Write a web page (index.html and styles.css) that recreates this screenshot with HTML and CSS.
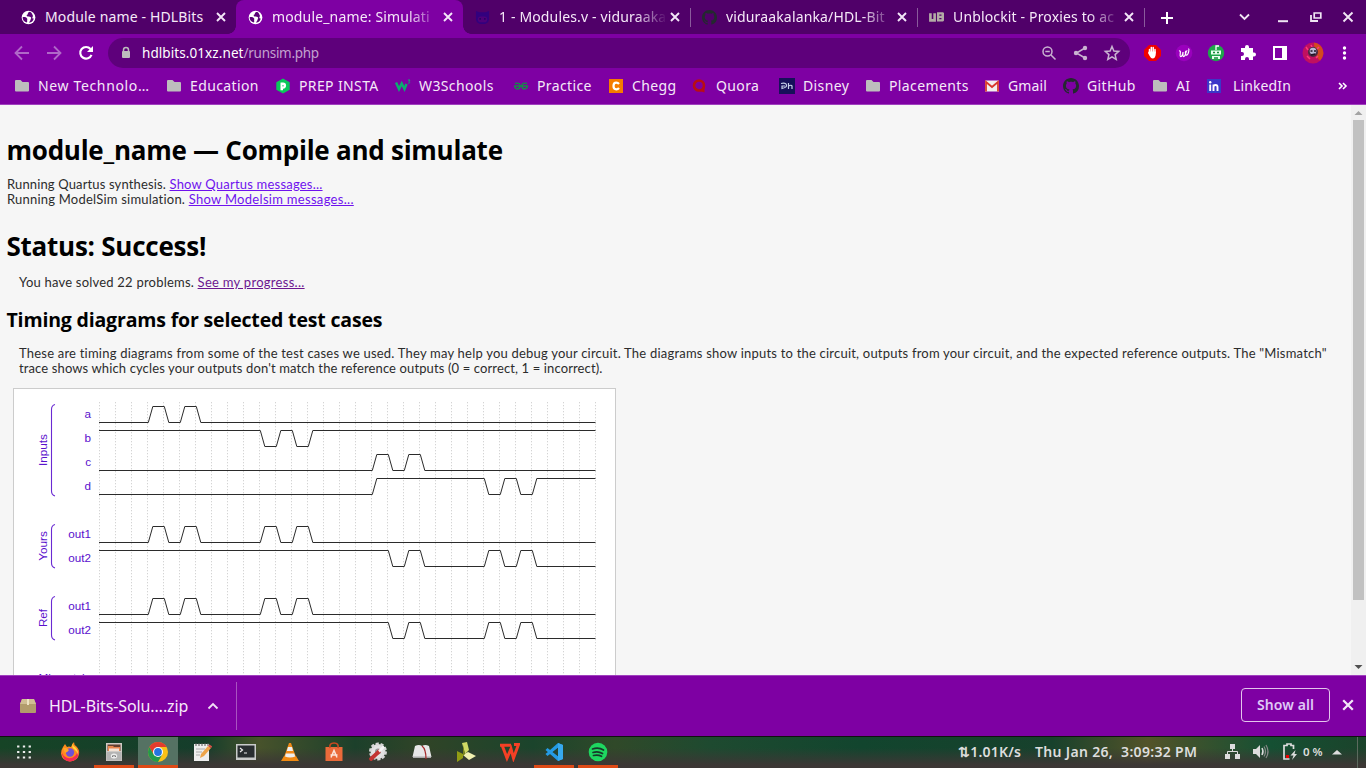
FILE: index.html
```html
<!DOCTYPE html>
<html lang="en">
<head>
<meta charset="utf-8">
<title>module_name: Simulation</title>
<link rel="stylesheet" href="styles.css">
</head>
<body>
<svg class="defs" aria-hidden="true">
  <symbol id="x" viewBox="0 0 10 10"><path d="M1 1l8 8M9 1l-8 8" fill="none" stroke="#f3e6f8" stroke-width="1.9"/></symbol>
  <symbol id="globe" viewBox="0 0 16 16"><circle cx="8" cy="8" r="7.3" fill="#fff"/><path d="M9.3 1.8C7.4 2.6 7 3.5 7.4 4.6c-2 .2-1.5 2-.4 2.4 1.6.5 3.3-.2 3.8 1.2.2 1-.6 1.3-.6 2.1 0 .9-1.1 1.4-1.6 3.2 2.700-.2 4.600-2 5-4.500-1.100.6-1.700-.3-1.400-1.200.3-1 .9-1.300.2-2.600-.7-1.600-1.200-2.700-3.100-3.400zM1.700 7.700c1.800-.4 3.800-.1 4.800 1.300.7 1-.3 1.500.1 2.400.2.7 0 1.300-.6 2C3.600 12.600 1.700 10.600 1.700 7.700z" fill="#5a0076"/></symbol>
  <symbol id="folder" viewBox="0 0 16 16"><path d="M2 2h4.500l2 2H14q1 0 1 1v7.500q0 1-1 1H2q-1 0-1-1V3q0-1 1-1z" fill="#bdbdbd"/></symbol>
  <symbol id="github" viewBox="0 0 16 16"><path fill="#24292f" d="M8 0C3.580 0 0 3.580 0 8c0 3.540 2.290 6.530 5.470 7.590.4.070.55-.17.55-.38 0-.19-.01-.82-.01-1.490-2.010.37-2.530-.49-2.690-.94-.09-.23-.48-.94-.82-1.130-.28-.15-.68-.52-.01-.53.63-.01 1.080.58 1.230.82.72 1.210 1.870.87 2.330.66.070-.52.28-.87.51-1.070-1.780-.2-3.640-.89-3.640-3.950 0-.87.31-1.590.82-2.150-.08-.2-.36-1.020.08-2.120 0 0 .67-.21 2.200.82.640-.18 1.320-.27 2-.27s1.360.09 2 .27c1.530-1.040 2.200-.82 2.200-.82.44 1.100.16 1.920.08 2.120.51.56.82 1.270.82 2.150 0 3.070-1.870 3.750-3.650 3.950.29.25.54.73.54 1.480 0 1.070-.01 1.930-.01 2.200 0 .21.15.46.55.38A8.010 8.010 0 0 0 16 8c0-4.420-3.580-8-8-8z"/></symbol>
</svg>

<header class="browser">
  <div class="tabs">
    <div class="tab"><svg class="fav"><use href="#globe"/></svg><span class="title">Module name - HDLBits</span><svg class="close"><use href="#x"/></svg></div>
    <div class="tab active"><svg class="fav"><use href="#globe"/></svg><span class="title fade">module_name: Simulati</span><svg class="close"><use href="#x"/></svg></div>
    <div class="tab"><svg class="fav" viewBox="0 0 16 16"><path d="M1 1l4 1.500h6L15 1v9q-1 5-7 5t-7-5z" fill="#32007e"/><rect x="3" y="7" width="10" height="6" rx="3" fill="#4f0079"/><path d="M5.500 8.500v2M10.500 8.500v2" stroke="#250060" stroke-width="1.500"/></svg><span class="title fade">1 - Modules.v - viduraaka</span><svg class="close"><use href="#x"/></svg></div>
    <div class="tab sep"><svg class="fav"><use href="#github"/></svg><span class="title fade">viduraakalanka/HDL-Bit</span><svg class="close"><use href="#x"/></svg></div>
    <div class="tab sep"><svg class="fav" viewBox="0 0 16 16"><path d="M1.500 3.500v7.500h4.500V3.500" fill="none" stroke="#b3aaa6" stroke-width="2.800"/><path d="M8.500 2.300h6.500l1 1v8l-1 1H8.500z" fill="#b3aaa6"/><path d="M11 5.500h2.300M11 9.200h2.300" stroke="#500069" stroke-width="1.300"/></svg><span class="title fade">Unblockit - Proxies to ac</span><svg class="close"><use href="#x"/></svg></div>
    <div class="newtab"><svg width="12" height="12"><path d="M6 0v12M0 6h12" stroke="#fff" stroke-width="2"/></svg></div>
    <svg class="window" width="120" height="34" fill="none" stroke="#f0e6f4"><path d="M5 14.500l4.500 4.500 4.500-4.500" stroke-width="1.800"/><path d="M43 21.200h10" stroke-width="2"/><path d="M79.200 13h6.600v5h-6.600z" stroke-width="1.700"/><path d="M76 15v6h7" stroke-width="1.800"/><path d="M108.500 12.500l9 9M117.500 12.500l-9 9" stroke-width="1.900"/></svg>
  </div>

  <div class="toolbar">
    <svg class="nav" width="110" height="38" fill="none" stroke-width="1.800"><path d="M29 19H16M22 12.500L15.500 19l6.500 6.500M47 19h13M54 12.500l6.500 6.500-6.500 6.500" stroke="#b068c8"/><path d="M90.500 15a5.800 5.800 0 1 0 1 5.800" stroke="#fff" stroke-width="2.100"/><path d="M93 12v6h-6z" fill="#fff"/></svg>
    <div class="omnibox">
      <svg width="10" height="14"><path d="M2.500 6V4a2.500 2.500 0 0 1 5 0v2" fill="none" stroke="#bdbdbd" stroke-width="1.500"/><rect x="1" y="5" width="8" height="7" rx="1" fill="#bdbdbd"/></svg>
      <span class="url"><span class="host">hdlbits.01xz.net</span><span class="path">/runsim.php</span></span>
      <svg class="acts" width="80" height="18" fill="none" stroke="#c9b3d1" stroke-width="1.500"><circle cx="6.500" cy="7.500" r="4.500"/><path d="M4.300 7.500h4.500M10 11l4.500 4.500"/><path d="M44 4l-8.500 5 8.500 5"/><g fill="#c9b3d1" stroke="none"><circle cx="44" cy="4" r="2.200"/><circle cx="35" cy="9" r="2.200"/><circle cx="44" cy="14" r="2.200"/></g><path d="M71 2.500l1.900 4.500 4.800.4-3.600 3.200 1.100 4.800-4.200-2.600-4.200 2.600 1.100-4.800-3.600-3.200 4.800-.4z"/></svg>
    </div>
    <svg class="exts" width="226" height="38">
      <path d="M9 11h7l5 5v6l-5 5H9l-5-5v-6z" fill="#f00000"/><path d="M9.500 19v-3.500M11.300 18v-4.500M13.200 18v-4.500M15 19v-3.500" stroke="#fff" stroke-width="1.500" stroke-linecap="round"/><path d="M8.700 17.500h7v3.500q-.8 3.500-3 3.500-2 0-3.200-2.700L8 19z" fill="#fff"/>
      <circle cx="44" cy="19" r="8.300" fill="#9a00bd"/><path d="M39 17c3-1 0 5 1.500 5.500s2.500-3 2.500-4.500c0 2-.5 5 1 4.500s2-5 2.500-5.500c-2 0-1 5 .5 4s2.500-6 1.500-6.500" fill="none" stroke="#fff" stroke-width="1.200"/>
      <circle cx="76" cy="19" r="8.200" fill="#1fa64a"/><path d="M71 16.500h10v4H71zM72 22h8v3h-8z" fill="#e9fff0"/><path d="M76 16v-4h3" stroke="#fff" stroke-width="1.300" fill="none"/><path d="M73 18.500h2M77 18.500h2M74 24h4" stroke="#168a3b" stroke-width="1.300"/>
      <path d="M101 14h4v-1a2 2 0 0 1 4 0v1h4v4.500h1a2 2 0 0 1 0 4h-1V26h-4v-1a2 2 0 0 0-4 0v1h-4v-4h1a2 2 0 0 0 0-4h-1z" fill="#fff"/>
      <path d="M134 13h12v12h-12z" fill="none" stroke="#fff" stroke-width="2"/><path d="M142 12h5v14h-5z" fill="#fff"/>
      <circle cx="173" cy="19" r="10.500" fill="#c01060"/><path d="M174 8.500a10.500 10.500 0 0 1 6 18l-5-5z" fill="#d24a20"/><circle cx="173" cy="18" r="5" fill="#482942"/><circle cx="173" cy="17" r="3.300" fill="#b9b8d4"/><path d="M170.500 17h2M174 17h2M171 21l4-1" stroke="#201426" stroke-width="1.300"/><path d="M166 13l2 3M167 22l3 3M179 13l-2 2M171 11l1 2M176 24l2-2" stroke="#ff387c" stroke-width="1.500"/>
      <g fill="#fff"><circle cx="204.500" cy="14" r="1.700"/><circle cx="204.500" cy="19" r="1.700"/><circle cx="204.500" cy="24" r="1.700"/></g>
    </svg>
  </div>

  <nav class="bookmarks">
    <div class="bm wide"><svg><use href="#folder"/></svg><span>New Technolo…</span></div>
    <div class="bm"><svg><use href="#folder"/></svg><span>Education</span></div>
    <div class="bm"><svg viewBox="0 0 16 16"><path d="M8 .5l6.700 3.800v7.500L8 15.500l-6.700-3.800V4.300z" fill="#0ac85a"/><path d="M5.500 4.500H8a3 3 0 0 1 0 6.200v1.600H5.500z" fill="#fff"/><path d="M7.500 7h1v1.500h-1z" fill="#0ac85a"/></svg><span>PREP INSTA</span></div>
    <div class="bm"><svg viewBox="0 0 16 16"><path d="M1 4.500L4 11l2.700-5.500L9.500 11l2-5" fill="none" stroke="#0bac70" stroke-width="2.500"/><path d="M13 2h2l-1 1.500q2 1-.8 2" fill="none" stroke="#0bac70"/></svg><span>W3Schools</span></div>
    <div class="bm"><svg viewBox="0 0 16 16"><path d="M1 8h14M2 5.500q5-1.500 5 2.500 0 3-2.500 3T1.500 8M14 5.500Q9 4 9 8q0 3 2.500 3T14.500 8" fill="none" stroke="#168c49" stroke-width="1.400"/></svg><span>Practice</span></div>
    <div class="bm"><svg viewBox="0 0 16 16"><path d="M1 1h14v14H1z" fill="#f57c00"/><path d="M11 6Q10 4.700 8.300 4.700 5.500 4.700 5.500 8t2.800 3.300Q10 11.300 11 10" fill="none" stroke="#fff" stroke-width="2.200"/></svg><span>Chegg</span></div>
    <div class="bm"><svg viewBox="0 0 16 16"><circle cx="7" cy="7.500" r="5" fill="none" stroke="#b90e13" stroke-width="2.600"/><path d="M8 13l4.500 1.500V8z" fill="#b90e13"/></svg><span>Quora</span></div>
    <div class="bm"><svg viewBox="0 0 16 16"><path d="M0 0h16v16H0z" fill="#17105a"/><path d="M2 5.500q5-1 5.500 1.500T3 10.500V8h3M9.500 5v6M9.500 8q3-1.500 3.500 0v3" fill="none" stroke="#c5cfe8" stroke-width="1.200"/></svg><span>Disney</span></div>
    <div class="bm"><svg><use href="#folder"/></svg><span>Placements</span></div>
    <div class="bm tight"><svg viewBox="0 0 16 16"><path d="M1 2.500h14v11H1z" fill="#f3efef"/><path d="M2 13.500V4l6 5 6-5v9.500" fill="none" stroke="#d9382c" stroke-width="1.800"/></svg><span>Gmail</span></div>
    <div class="bm"><svg><use href="#github"/></svg><span>GitHub</span></div>
    <div class="bm"><svg><use href="#folder"/></svg><span>AI</span></div>
    <div class="bm tight last"><svg viewBox="0 0 16 16"><path d="M1 1h14v14H1z" fill="#3b38c8"/><path d="M4.200 6.500V13M7.500 13V6.500M7.500 9q0-2 2-2t2 2v4" fill="none" stroke="#fff" stroke-width="1.900"/><circle cx="4.200" cy="4.200" r="1.200" fill="#fff"/></svg><span>LinkedIn</span></div>
    <svg class="more" viewBox="0 0 10 8"><path d="M1 1l3 3-3 3M5 1l3 3-3 3" fill="none" stroke="#fff" stroke-width="1.600"/></svg>
  </nav>
</header>

<div class="viewport">
  <main class="page">
    <h1><span>module_name — Compile and simulate</span></h1>
    <p class="log"><span class="q">Running Quartus synthesis.</span> <a>Show Quartus messages...</a><br><span>Running ModelSim simulation.</span> <a class="m">Show Modelsim messages...</a></p>
    <h1 class="status"><span>Status: Success!</span></h1>
    <p class="solved"><span>You have solved 22 problems.</span> <a class="seen">See my progress...</a></p>
    <h2><span>Timing diagrams for selected test cases</span></h2>
    <p class="about"><span>These are timing diagrams from some of the test cases we used. They may help you debug your circuit. The diagrams show inputs to the circuit, outputs from your circuit, and the expected reference outputs. The "Mismatch"</span><br><span class="l2">trace shows which cycles your outputs don't match the reference outputs (0 = correct, 1 = incorrect).</span></p>
    <div class="diagram">
      <svg width="601" height="330" viewBox="14 389 601 330">
        <defs><pattern id="grid" x="99" y="402" width="16" height="3" patternUnits="userSpaceOnUse"><path d="M0 0h1v1H0z" fill="#d4d4d4"/><path d="M0 1h1v1H0z" fill="#f2f2f2"/></pattern></defs>
        <path d="M99 402h497v300H99z" fill="url(#grid)"/>
        <g class="wave">
          <path d="M99 422.500H148.300l4.500-16h11.500l4.500 16h11.500l4.500-16h11.500l4.500 16H595.500"/>
          <path d="M99 430.500H260.300l4.500 16h11.500l4.500-16h11.500l4.500 16h11.500l4.500-16H595.500"/>
          <path d="M99 470.500H372.300l4.500-16h11.500l4.500 16h11.500l4.500-16h11.500l4.500 16H595.500"/>
          <path d="M99 494.500H372.300l4.500-16H484.300l4.500 16h11.500l4.500-16h11.500l4.500 16h11.500l4.500-16H595.500"/>
          <g id="outs"><path d="M99 542.500H148.300l4.500-16h11.500l4.500 16h11.500l4.500-16h11.500l4.500 16H260.300l4.500-16h11.500l4.500 16h11.500l4.500-16h11.500l4.500 16H595.500"/>
          <path d="M99 550.500H388.300l4.500 16h11.500l4.500-16h11.500l4.500 16H484.300l4.500-16h11.500l4.500 16h11.500l4.500-16h11.500l4.500 16H595.500"/></g>
          <use href="#outs" y="72"/>
        </g>
        <g class="bracket"><path d="M55 404.500q-3.500 1-3.500 5V491q0 4 3.500 5"/><path d="M55 524.500q-3.500 1-3.500 5V563q0 4 3.500 5"/><path d="M55 596.500q-3.500 1-3.500 5V635q0 4 3.500 5"/></g>
        <g class="names"><text x="91" y="418">a</text><text x="91" y="442">b</text><text x="91" y="466">c</text><text x="91" y="490">d</text><text x="91" y="538">out1</text><text x="91" y="562">out2</text><text x="91" y="610">out1</text><text x="91" y="634">out2</text><text x="88.500" y="682">Mismatch</text></g>
        <g class="groups"><text transform="translate(47 450)rotate(-90)">Inputs</text><text transform="translate(47 546)rotate(-90)">Yours</text><text transform="translate(47 618)rotate(-90)">Ref</text></g>
      </svg>
    </div>
  </main>
  <div class="scroll"><svg width="15" height="15"><path d="M3.500 10h8L7.500 6z" fill="#a3a3a3"/></svg><div class="thumb"></div><svg width="15" height="15"><path d="M3.500 5h8L7.500 9z" fill="#505050"/></svg></div>
</div>

<footer class="downloads">
  <svg class="zip" width="16" height="14"><path d="M2 0h12l2 5v8q0 1-1 1H1q-1 0-1-1V5z" fill="#b29c6c"/><path d="M2 0h12l2 5H0z" fill="#d0be93"/><path d="M7 0h2v6H7z" fill="#eee3c4"/></svg>
  <span class="file">HDL-Bits-Solu….zip</span>
  <svg class="caret" width="12" height="8"><path d="M1.500 6.500L6 2l4.500 4.500" fill="none" stroke="#f0dff5" stroke-width="1.800"/></svg>
  <div class="rule"></div>
  <div class="showall"><span>Show all</span></div>
  <svg class="close"><use href="#x"/></svg>
</footer>

<div class="taskbar">
  <div class="apps">
    <div class="app launcher"><svg viewBox="0 0 20 20"><g fill="#eee"><path d="M4 4h2v2H4zM9 4h2v2H9zM14 4h2v2h-2zM4 9h2v2H4zM9 9h2v2H9zM14 9h2v2h-2zM4 14h2v2H4zM9 14h2v2H9zM14 14h2v2h-2z" transform="translate(-1.500 -1)scale(1.150 1.100)"/></g></svg></div>
    <div class="app"><svg viewBox="0 0 20 20"><path d="M3 5l2-3 2 3q2-1 4 0 1-3 3-5 0 3 2 4 4 4 3 8-1 7-9 7.500-8-.5-9-8Q1 8 3 5z" fill="#ff8a1e"/><path d="M1.500 9q1 5 5 6.500 5 2 9-2 3-4 1-8 2 3 2.200 6-1 7.500-8.700 8Q2 19 1.500 9z" fill="#f62c52"/><path d="M13 1q-.5 3 2 4 4 4 3 8-1-4-4-6-3-2-1-6z" fill="#ffd83a"/><circle cx="10" cy="10.500" r="4.200" fill="#7051d5"/><path d="M3 6q3-1 6 2-1 2-4 3z" fill="#ffa629"/></svg></div>
    <div class="app open"><svg viewBox="0 0 20 20"><path d="M2 1h16v18H2z" fill="#cfcac5"/><path d="M3.500 2.500h13V9h-13z" fill="#65402f"/><path d="M4 4h5l1 1h6v4H4z" fill="#e7864d"/><path d="M5 6.500h10V9H5z" fill="#f3e3d6"/><path d="M2.500 10h15v8.500h-15z" fill="#b4b4b4"/><ellipse cx="10" cy="14" rx="3.200" ry="2.500" fill="#eee"/><path d="M8.500 15v-1.200h3V15" fill="none" stroke="#777"/></svg></div>
    <div class="app open current"><svg viewBox="0 0 20 20"><circle cx="10" cy="10" r="10" fill="#fbc116"/><path d="M1.340 5A10 10 0 0 1 18.660 5H10L5.670 12.500z" fill="#e33b2e"/><path d="M1.340 5A10 10 0 0 0 10 20l4.330-7.500H5.670z" fill="#229a4b"/><circle cx="10" cy="10" r="5" fill="#fff"/><circle cx="10" cy="10" r="3.900" fill="#2475df"/></svg></div>
    <div class="app"><svg viewBox="0 0 20 20"><path d="M2 2h15v17H2z" fill="#eee"/><path d="M4 1v3M7 1v3M10 1v3M13 1v3M16 1v3" stroke="#555"/><path d="M4 7h9M4 10h6M4 13h4" stroke="#aaa"/><path d="M8 16l1-4 7-8 3 2-7 8z" fill="#eda449"/><path d="M16 4l1.500-1.500 3 2L19 6z" fill="#d55046"/></svg></div>
    <div class="app"><svg viewBox="0 0 20 20"><path d="M0 2h20v16H0z" fill="#c9cbca"/><path d="M1.500 3.500h17v12h-17z" fill="#292e30"/><path d="M4 6l2.500 2L4 10M8 11h3" fill="none" stroke="#eee" stroke-width="1.200"/></svg></div>
    <div class="app"><svg viewBox="0 0 20 20"><path d="M4 14h12l3 5H1z" fill="#f18a13"/><path d="M9 1h2l5 14q-6 3-12 0z" fill="#f28a16"/><path d="M8 5h4l1 4H6.800zM5.800 11.500h8.400l1 3q-5 2-10.200 0z" fill="#eee"/></svg></div>
    <div class="app"><svg viewBox="0 0 20 20"><path d="M1.500 5h17v14h-17z" fill="#ea6a3a"/><path d="M6 6q-1-5 4-5t4 5" fill="none" stroke="#ca4921" stroke-width="1.600"/><path d="M7 15.500l3-7 3 7M6.500 13h7" fill="none" stroke="#fbe4da" stroke-width="1.500"/></svg></div>
    <div class="app"><svg viewBox="0 0 20 20"><circle cx="10" cy="9.500" r="7.500" fill="#e3e3e3" stroke="#d7d7d7" stroke-width="3" stroke-dasharray="3 1.700"/><circle cx="10" cy="9.500" r="3" fill="#929797"/><path d="M3 17L11 9.500" stroke="#c33532" stroke-width="3.800" stroke-linecap="round"/><path d="M11 9.500l5-5" stroke="#f5f5f5" stroke-width="2.500"/></svg></div>
    <div class="app"><svg viewBox="0 0 20 20"><path d="M3 4L.5 15H9l1 1 1-1h8.500L17 4q-4-2-7 0-3-2-7 0z" fill="#e7e7e7"/><path d="M1 14.500h18v1.500H1z" fill="#aaa"/><path d="M10 4q4 3 4 13" fill="none" stroke="#a52b2b" stroke-width="1.300"/></svg></div>
    <div class="app"><svg viewBox="0 0 20 20"><path d="M6 1l5-1 2 8-4 4z" fill="#d0da65"/><path d="M1 9l6 3v4l-6 4z" fill="#929c14"/><path d="M7 13l5-3 8 4-7 4z" fill="#f1f1b0"/><path d="M7 3l2 9-2 2V9z" fill="#79851b"/></svg></div>
    <div class="app"><svg viewBox="0 0 20 20"><path d="M0 3.200h11M2 3l5 13 4-9 2.500 9 5-13.500H14" fill="none" stroke="#f44025" stroke-width="3"/></svg></div>
    <div class="app open"><svg viewBox="0 0 20 20"><path d="M14 1l5 2v14l-5 2L1.500 8l2-2L15 15V5L3.500 14l-2-2z" fill="#249be5"/><path d="M14 1l5 2v14l-5 2z" fill="#37a9ee"/><path d="M14 6v8L9 10z" fill="#254331"/></svg></div>
    <div class="app open"><svg viewBox="0 0 20 20"><circle cx="10" cy="10" r="9.300" fill="#1ed760"/><path d="M4.500 7q6-2 11 1M5 10.500q5-1.700 9.500 1M5.500 13.500q4.500-1 8 .8" fill="none" stroke="#17382a" stroke-width="1.700" stroke-linecap="round"/></svg></div>
  </div>
  <div class="status-area">
    <span class="net">⇅1.01K/s</span><span class="date">Thu Jan 26,&nbsp; 3:09:32 PM</span>
    <svg class="tray" width="76" height="20" fill="#ddd"><path d="M5 2h5v5H5zM0 12h5v5H0zM10 12h5v5h-5z"/><path d="M7.500 7v3M2.500 12V9.500h10V12" fill="none" stroke="#ddd"/><path d="M28 7h3l4-4v13l-4-4h-3z"/><path d="M37 6q2 3.500 0 7" fill="none" stroke="#ddd" stroke-width="1.500"/><path d="M39 4.500q3 5 0 10M41 3q4 6.500 0 13" fill="none" stroke="#888" stroke-width="1.200"/><path d="M68.500 7V3.500H66V2h-4v1.500h-3V17h5.500" fill="none" stroke="#ddd" stroke-width="1.700"/><path d="M61 13h3v3h-3z" fill="#e00"/><path d="M70.500 8l-5 5.500h3l-1.500 4.500 5-6h-2.500z"/></svg>
    <span class="pct">0 %</span>
    <svg width="10" height="6"><path d="M0 5.500h10L5 1z" fill="#ddd"/></svg>
    <div class="edge"></div>
  </div>
</div>
</body>
</html>
```
FILE: styles.css
```css
* { box-sizing: border-box; }
body { margin: 0; width: 1366px; height: 768px; overflow: hidden; display: flex; flex-direction: column; background: #f6f6f6; font-family: "Noto Sans", "Open Sans", sans-serif; }
svg { flex: none; display: block; }
.defs { display: none; }
span, a { white-space: nowrap; }

.browser { height: 105px; flex: none; background: #7e00a3; border-bottom: 1px solid #a040be; color: #f5e9f8; }
.tabs { height: 34px; display: flex; background: #500069; padding-left: 9px; }
.tab { width: 227px; height: 34px; flex: none; display: flex; align-items: center; padding-left: 12px; }
.tab.active { position: relative; background: #7e00a3; border-radius: 8px 8px 0 0; }
.tab.active::before, .tab.active::after { content: ""; position: absolute; bottom: 0; width: 8px; height: 8px; }
.tab.active::before { right: 100%; background: radial-gradient(circle at 0 0, transparent 7.5px, #7e00a3 8px); }
.tab.active::after { left: 100%; background: radial-gradient(circle at 100% 0, transparent 7.5px, #7e00a3 8px); }
.tab .fav { width: 15px; height: 15px; }
.tab .title { width: 168px; margin-left: 9px; font-size: 14px; line-height: 20px; letter-spacing: .15px; }
.title.fade { -webkit-mask-image: linear-gradient(90deg, #000 136px, transparent 168px); mask-image: linear-gradient(90deg, #000 136px, transparent 168px); }
.close { width: 10px; height: 10px; }
.tab .close { margin-left: 3px; }
.tab.sep { background: linear-gradient(#8a5a9c, #8a5a9c) 0 8px / 1px 19px no-repeat; }
.newtab { width: 45px; display: flex; align-items: center; justify-content: center; border-left: 1px solid #8a5a9c; height: 19px; margin-top: 8px; }
.window { margin-left: 46px; }

.toolbar { height: 38px; display: flex; align-items: center; }
.nav { margin-right: -2px; }
.omnibox { width: 1022px; height: 30px; border-radius: 15px; background: #5e007b; display: flex; align-items: center; padding: 0 9px 0 13px; }
.url { margin-left: 11px; font-size: 13.5px; line-height: 20px; }
.host { color: #fff; letter-spacing: .08px; }
.path { color: #c3a0cf; letter-spacing: -.28px; }
.acts { margin-left: auto; }
.exts { margin-left: 10px; }

.bookmarks { height: 28px; display: grid; grid-template-columns: 152px 109px 120px 118px 95px 84px 87px 86px 119px 79px 89px 54px 132px 10px; padding-left: 14px; align-items: center; }
.bm { display: flex; align-items: center; gap: 8px; font-size: 14px; line-height: 20px; height: 28px; letter-spacing: .38px; }
.bm.wide { letter-spacing: .65px; }
.bm.tight { letter-spacing: .13px; }
.bm.last { gap: 11px; }
.bm svg { width: 16px; height: 16px; }
.bm .more { width: 10px; height: 8px; }
.more { width: 10px; height: 8px; }

.viewport { flex: 1; min-height: 0; display: flex; overflow: hidden; }
.page { flex: 1; min-width: 0; padding: 27px 0 0 7px; font: 13px/15px Lato, sans-serif; letter-spacing: .211px; color: #2c2c2c; }
h1, h2 { font-family: "Open Sans", sans-serif; font-weight: 700; color: #000; margin: 0 0 0 -.5px; }
h1 { font-size: 26px; line-height: 36px; letter-spacing: -.25px; }
h2 { font-size: 19.5px; line-height: 27px; margin-top: 16px; letter-spacing: -.17px; }
p { margin: 0; }
a { color: #6f12ee; text-decoration: underline; }
a.m { letter-spacing: .3px; }
a.seen { color: #6c1690; letter-spacing: .28px; }
.log { margin-top: 9px; }
.log .q { letter-spacing: .14px; }
.status { margin-top: 21px; }
.solved { margin: 11px 0 0 12px; }
.about { margin: 13px 0 0 12px; }
.about .l2 { letter-spacing: .124px; }
.diagram { margin: 12px 0 0 6px; width: 603px; height: 332px; border: 1px solid #ccc; background: #fff; }
.wave { fill: none; stroke: #2b2b2b; stroke-width: 1; }
.bracket { fill: none; stroke: #6a2ad2; stroke-width: 1.1; }
.names, .groups { font: 11.7px "Liberation Sans", Arial, sans-serif; letter-spacing: 0; fill: #5a10cd; }
.names { text-anchor: end; }
.groups { text-anchor: middle; }
.scroll { width: 15px; background: #f0f0f0; display: flex; flex-direction: column; }
.thumb { height: 480px; margin: 0 2px auto; background: #c1c1c1; }

.downloads { height: 61px; flex: none; background: #7e00a3; border-top: 1px solid #a040be; display: flex; align-items: center; padding: 0 12px 0 20px; color: #f7eafa; }
.file { width: 140px; margin-left: 13px; font-size: 16px; line-height: 22px; letter-spacing: -.1px; }
.caret { margin-left: 18px; }
.rule { width: 1px; height: 48px; margin-left: 17px; background: #a953c0; }
.showall { width: 89px; height: 34px; margin-left: auto; margin-top: -3px; margin-right: 12px; border: 1px solid #e3c6ec; border-radius: 4px; display: flex; align-items: center; justify-content: center; font-size: 14px; font-weight: 600; letter-spacing: .1px; color: #dfc8f6; }
.downloads .close { width: 12px; height: 12px; margin-top: -2px; }

.taskbar { height: 32px; flex: none; display: flex; background: linear-gradient(rgba(60,55,52,0) 35%, #3c3735 90%), linear-gradient(90deg, #164426, #153d2b 15%, #47522b 19%, #1c402b 26%, #304427 31%, #1b442c 39%, #304929 45%, #1e4a30 52%, #12452e 63%, #17412c 77%, #535329 84%, #155033 93%, #1b432b); border-top: 1px solid #111; color: #ddd; }
.apps { display: flex; padding-left: 6px; gap: 4px; }
.app { width: 40px; height: 31px; padding-top: 5px; border-bottom: 3px solid transparent; }
.app.launcher { width: 36px; margin-right: 4px; }
.app svg { width: 20px; height: 20px; margin: 0 auto; }
.app.open { border-bottom-color: #de4a16; }
.app.current { background: #557263; }
.status-area { margin-left: auto; width: 408px; height: 29px; display: flex; align-items: center; font-weight: 600; font-size: 14px; }
.net { width: 77px; letter-spacing: .2px; }
.date { width: 190px; letter-spacing: .33px; }
.pct { width: 29px; font-size: 11.5px; }
.tray { margin-right: 2px; }
.edge { width: 1px; height: 31px; margin: 2px 8px 0 auto; background: #5c6a5e; }
```
